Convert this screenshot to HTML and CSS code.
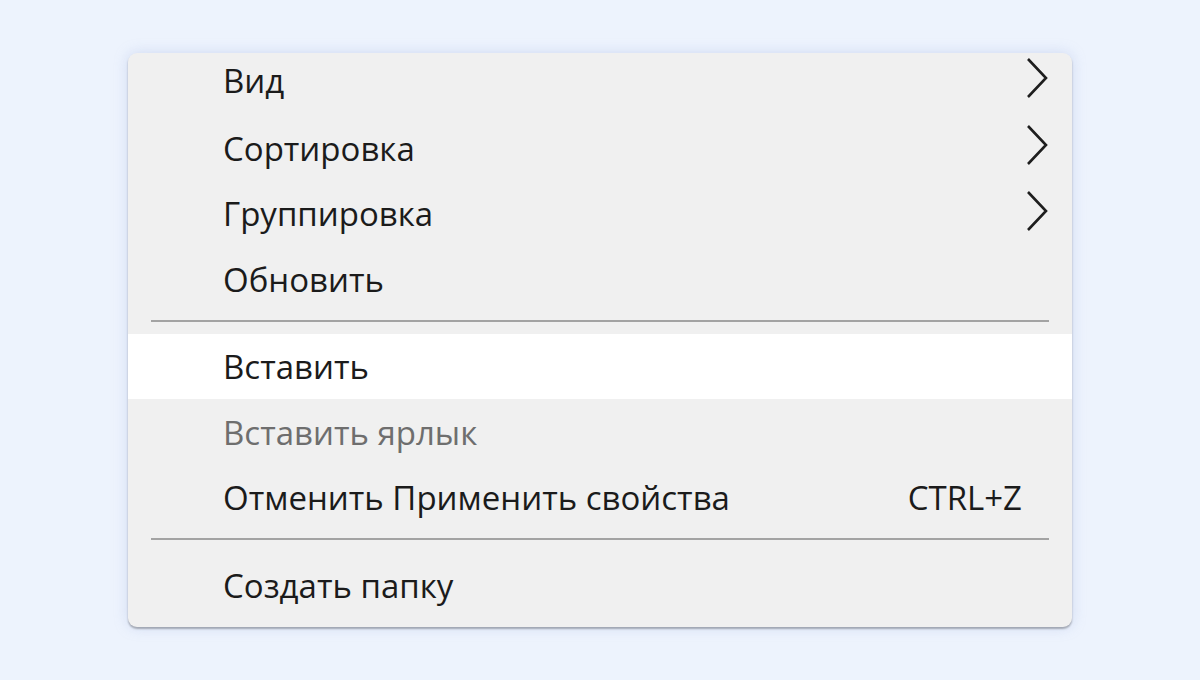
FILE: index.html
```html
<!DOCTYPE html>
<html lang="ru">
<head>
<meta charset="utf-8">
<title>Контекстное меню</title>
<link rel="stylesheet" href="styles.css">
</head>
<body>
<div class="stage">
  <div class="menu">
    <div class="item first"><span class="label">Вид</span><svg class="chev" viewBox="0 0 22 42"><path d="M2 2 L20 21 L2 40"/></svg></div>
    <div class="item"><span class="label">Сортировка</span><svg class="chev" viewBox="0 0 22 42"><path d="M2 2 L20 21 L2 40"/></svg></div>
    <div class="item"><span class="label">Группировка</span><svg class="chev" viewBox="0 0 22 42"><path d="M2 2 L20 21 L2 40"/></svg></div>
    <div class="item"><span class="label">Обновить</span></div>
    <div class="sep"></div>
    <div class="item hover"><span class="label">Вставить</span></div>
    <div class="item disabled"><span class="label">Вставить ярлык</span></div>
    <div class="item"><span class="label">Отменить Применить свойства</span><span class="shortcut">CTRL+Z</span></div>
    <div class="sep"></div>
    <div class="item"><span class="label">Создать папку</span></div>
  </div>
</div>
</body>
</html>
```

FILE: styles.css
```css
html, body {
  margin: 0;
  padding: 0;
}
body {
  background: #edf3fd;
  width: 1200px;
  height: 680px;
  overflow: hidden;
  font-family: "Open Sans", "Noto Sans", sans-serif;
}
.stage {
  padding: 53px 0 0 128px;
}
.menu {
  width: 944px;
  height: 574px;
  box-sizing: border-box;
  background: #f0f0f0;
  border-radius: 9px;
  padding-bottom: 10px;
  box-shadow: 0 2px 2px rgba(0, 0, 0, 0.28), 0 0 14px rgba(150, 170, 220, 0.35);
  overflow: hidden;
}
.item {
  height: 65.5px;
  display: flex;
  align-items: center;
  padding: 1px 24px 0 95px;
  box-sizing: border-box;
  font-size: 33px;
  color: #1b1b1b;
}
.item.first {
  height: 62px;
  padding-top: 0;
  padding-bottom: 7px;
}
.item.hover {
  background: #ffffff;
}
.item.disabled {
  color: #6e6e6e;
}
.label {
  flex: 1;
  white-space: nowrap;
}
.shortcut {
  margin-right: 26px;
}
.chev {
  width: 22px;
  height: 42px;
  margin-bottom: 6px;
  fill: none;
  stroke: #1e1e1e;
  stroke-width: 2.6;
}
.sep {
  height: 22px;
  padding: 8px 23px 0 23px;
  box-sizing: border-box;
}
.sep::before {
  content: "";
  display: block;
  height: 2px;
  background: #a3a3a3;
}
```
